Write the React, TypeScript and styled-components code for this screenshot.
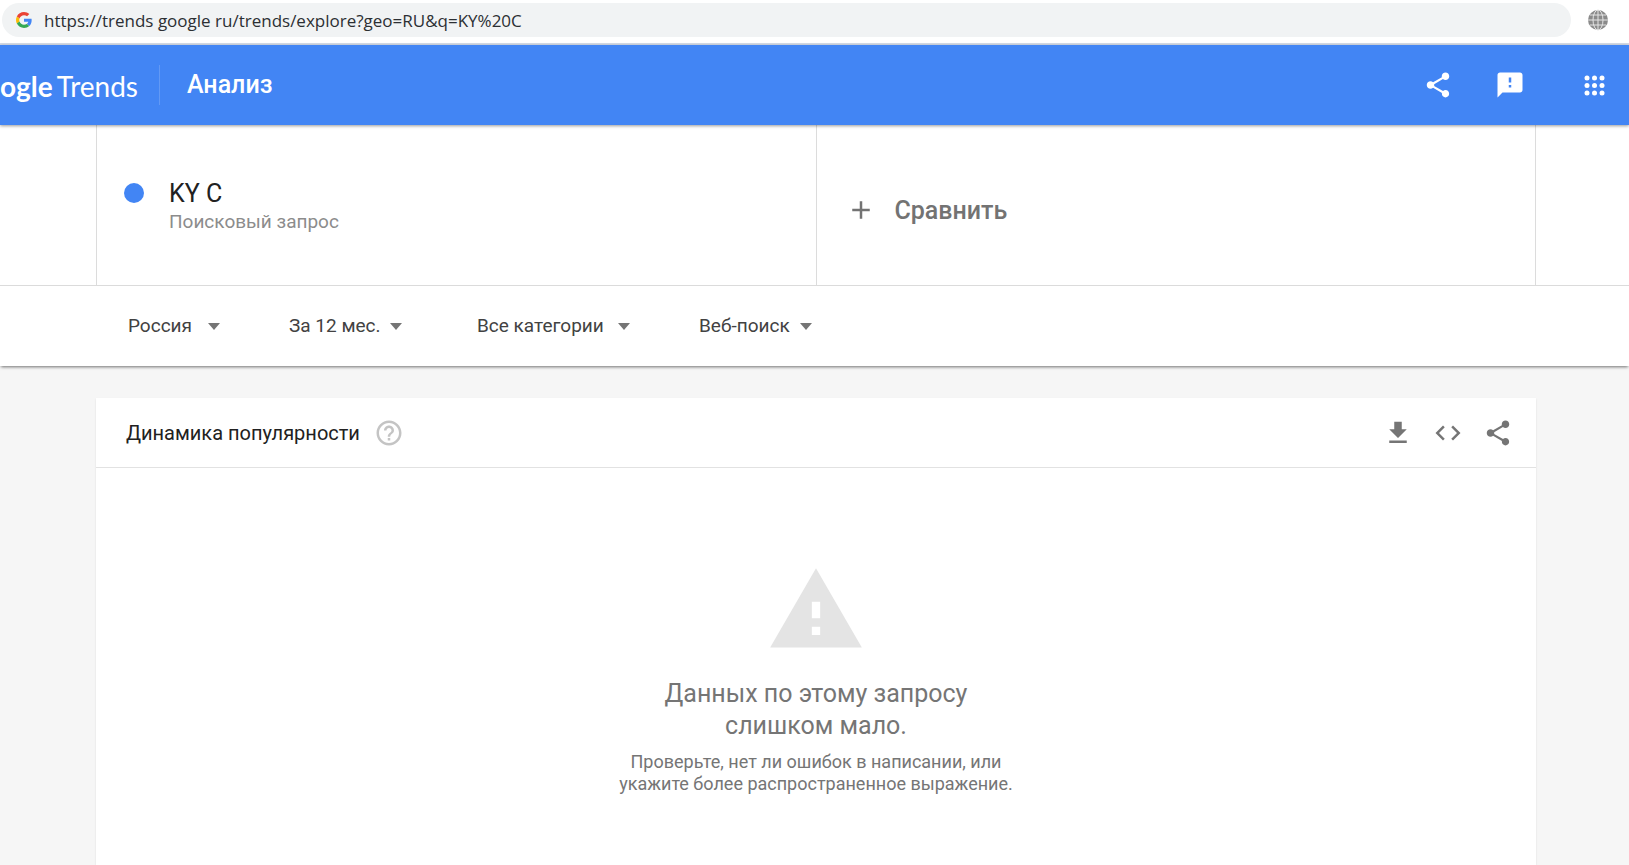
import React from "react";
import styled, { createGlobalStyle } from "styled-components";

const GlobalStyle = createGlobalStyle`
  * { box-sizing: border-box; }
  body { margin: 0; font-family: Roboto, "Liberation Sans", sans-serif; color: #212121; background: #f6f6f6; }
  h1, h2, h3, p { margin: 0; font-weight: 400; }
  button { font-family: inherit; background: none; border: 0; padding: 0; cursor: pointer; color: inherit; }
`;

const Page = styled.div`
  display: flex;
  flex-direction: column;
  min-height: 100vh;
`;

const BrowserBar = styled.div`
  display: flex;
  align-items: center;
  gap: 16px;
  padding: 3px 20px 6px 2px;
  background: #fff;
  border-bottom: 2px solid #d5dbe6;
`;

const AddressBox = styled.label`
  display: flex;
  flex: 1;
  align-items: center;
  gap: 12px;
  height: 34px;
  padding: 0 14px;
  border-radius: 17px;
  background: #f1f3f4;
`;

const AddressInput = styled.input`
  flex: 1;
  min-width: 0;
  padding: 0;
  border: 0;
  outline: 0;
  background: none;
  color: #2c2f33;
  font: 17px "Open Sans", "Noto Sans", sans-serif;
`;

const Header = styled.header`
  position: relative;
  display: flex;
  align-items: center;
  height: 80px;
  padding-right: 20px;
  background: #4285f4;
  color: #fff;
  box-shadow: 0 1px 3px rgba(0, 0, 0, 0.4);
`;

const Logo = styled.a`
  display: flex;
  gap: 4px;
  width: 160px;
  height: 40px;
  border-right: 1px solid #6299f5;
  color: #fff;
  font: 28px/42px Lato, sans-serif;
  text-decoration: none;
`;

const LogoStrong = styled.span`
  font-weight: 700;
`;

const SectionTitle = styled.h1`
  flex: 1;
  padding-left: 27px;
  font-size: 25px;
  font-weight: 500;
  line-height: 32px;
`;

const HeaderActions = styled.div`
  display: flex;
  align-items: center;
  gap: 42px;
`;

const IconButton = styled.button`
  display: flex;
`;

const QueryBand = styled.section`
  padding: 0 93px 0 96px;
  background: #fff;
  border-bottom: 1px solid #dcdcdc;
`;

const QueryRow = styled.div`
  display: grid;
  grid-template-columns: 1fr 1fr;
  height: 160px;
  border-right: 1px solid #dcdcdc;
`;

const QueryCell = styled.div`
  display: flex;
  padding: 53px 27px;
  gap: 25px;
  border-left: 1px solid #dcdcdc;
`;

const Dot = styled.span`
  width: 20px;
  height: 20px;
  margin-top: 5px;
  border-radius: 50%;
  background: #4285f4;
`;

const Term = styled.h2`
  font-size: 25px;
  line-height: 32px;
`;

const TermKind = styled.p`
  color: #8c8c8c;
  font-size: 19px;
  line-height: 24px;
`;

const CompareButton = styled.button`
  display: flex;
  align-items: center;
  gap: 19px;
  padding: 8px 29px 0;
  border-left: 1px solid #dcdcdc;
  color: #737373;
  font-size: 25px;
  font-weight: 500;
  text-align: left;
`;

const FilterBar = styled.div`
  position: relative;
  display: grid;
  grid-template-columns: 161px 188px 222px auto;
  align-items: center;
  height: 80px;
  padding: 0 128px;
  background: #fff;
  box-shadow: 0 2px 3px -1px rgba(0, 0, 0, 0.55);
`;

const FilterLabel = styled.label`
  display: flex;
  align-items: center;
`;

const FilterSelect = styled.select<{ $width: number }>`
  width: ${(p) => p.$width}px;
  margin-right: -12px;
  padding: 0 12px 0 0;
  appearance: none;
  border: 0;
  outline: 0;
  background: none;
  color: #424242;
  font: 19px/24px Roboto, sans-serif;
`;

const Caret = styled.span`
  border: 6px solid transparent;
  border-top: 7px solid #757575;
  border-bottom: 0;
  pointer-events: none;
`;

const Card = styled.main`
  display: flex;
  flex: 1;
  flex-direction: column;
  margin: 32px 93px 0 96px;
  background: #fff;
  box-shadow: 0 1px 2px rgba(0, 0, 0, 0.1);
`;

const CardHeader = styled.div`
  display: flex;
  align-items: center;
  gap: 14px;
  height: 70px;
  padding: 0 23px 0 30px;
  border-bottom: 1px solid #e2e2e2;
`;

const CardTitle = styled.h2`
  font-size: 20px;
  line-height: 24px;
`;

const CardActions = styled.div`
  display: flex;
  gap: 20px;
  margin-left: auto;
  color: #757575;
`;

const EmptyState = styled.div`
  display: flex;
  flex-direction: column;
  align-items: center;
  padding: 92px 24px 56px;
  color: #757575;
  text-align: center;
`;

const EmptyTitle = styled.h3`
  max-width: 320px;
  margin-top: 18px;
  font-size: 25px;
  line-height: 32px;
`;

const EmptyHint = styled.p`
  max-width: 400px;
  margin-top: 9px;
  font-size: 18px;
  line-height: 22px;
`;

const paths = {
  share:
    "M18 16.08c-.76 0-1.44.3-1.96.77L8.91 12.7c.05-.23.09-.46.09-.7s-.04-.47-.09-.7l7.05-4.11c.54.5 1.25.81 2.04.81 1.66 0 3-1.34 3-3s-1.34-3-3-3-3 1.34-3 3c0 .24.04.47.09.7L8.04 9.81C7.5 9.31 6.79 9 6 9c-1.66 0-3 1.34-3 3s1.34 3 3 3c.79 0 1.5-.31 2.04-.81l7.12 4.16c-.05.21-.08.43-.08.65 0 1.61 1.31 2.92 2.92 2.92s2.92-1.31 2.92-2.92-1.31-2.92-2.92-2.92z",
  feedback:
    "M20 2H4c-1.1 0-1.99.9-1.99 2L2 22l4-4h14c1.1 0 2-.9 2-2V4c0-1.1-.9-2-2-2zm-7 12h-2v-2h2v2zm0-4h-2V6h2v4z",
  download: "M19 9h-4V3H9v6H5l7 7 7-7zM5 18v2h14v-2H5z",
  code: "M9.4 16.6L4.8 12l4.6-4.6L8 6l-6 6 6 6 1.4-1.4zm5.2 0l4.6-4.6-4.6-4.6L16 6l6 6-6 6-1.4-1.4z",
  help: "M11 18h2v-2h-2v2zm1-16C6.48 2 2 6.48 2 12s4.48 10 10 10 10-4.48 10-10S17.52 2 12 2zm0 18c-4.41 0-8-3.59-8-8s3.59-8 8-8 8 3.59 8 8-3.59 8-8 8zm0-14c-2.21 0-4 1.79-4 4h2c0-1.1.9-2 2-2s2 .9 2 2c0 2-3 1.75-3 5h2c0-2.25 3-2.5 3-5 0-2.21-1.79-4-4-4z",
  warning: "M1 21h22L12 2 1 21zm12-3h-2v-2h2v2zm0-4h-2v-4h2v4z",
  plus: "M19 13h-6v6h-2v-6H5v-2h6V5h2v6h6v2z",
};

function Icon({ name, size = 30, color = "currentColor" }: { name: keyof typeof paths; size?: number; color?: string }) {
  return (
    <svg width={size} height={size} viewBox="0 0 24 24" fill={color} aria-hidden="true">
      <path d={paths[name]} />
    </svg>
  );
}

function GoogleMark() {
  return (
    <svg width="16" height="16" viewBox="0 0 48 48" aria-hidden="true">
      <path fill="#EA4335" d="M24 9.5c3.54 0 6.71 1.22 9.21 3.6l6.85-6.85C35.9 2.38 30.47 0 24 0 14.62 0 6.51 5.38 2.56 13.22l7.98 6.19C12.43 13.72 17.74 9.5 24 9.5z" />
      <path fill="#4285F4" d="M46.98 24.55c0-1.57-.15-3.09-.38-4.55H24v9.02h12.94c-.58 2.96-2.26 5.48-4.78 7.18l7.73 6c4.51-4.18 7.09-10.36 7.09-17.65z" />
      <path fill="#FBBC05" d="M10.53 28.59c-.48-1.45-.76-2.99-.76-4.59s.27-3.14.76-4.59l-7.98-6.19C.92 16.46 0 20.12 0 24s.92 7.54 2.56 10.78l7.97-6.19z" />
      <path fill="#34A853" d="M24 48c6.48 0 11.93-2.13 15.89-5.81l-7.73-6c-2.15 1.45-4.92 2.3-8.16 2.3-6.26 0-11.57-4.22-13.47-9.91l-7.98 6.19C6.51 42.62 14.62 48 24 48z" />
    </svg>
  );
}

function Globe() {
  return (
    <svg width="22" height="22" viewBox="0 0 22 22" aria-hidden="true">
      <circle cx="11" cy="11" r="10" fill="#8a8a8a" />
      <g fill="none" stroke="#e4e4e4" strokeWidth="1">
        <ellipse cx="11" cy="11" rx="5" ry="10" />
        <path d="M11 1v20M1 11h20M3 6h16M3 16h16" />
      </g>
    </svg>
  );
}

function AppsGrid() {
  const steps = [3, 10.5, 18];
  return (
    <svg width="21" height="21" viewBox="0 0 21 21" fill="#fff" aria-hidden="true">
      {steps.map((y) => steps.map((x) => <circle key={`${x}-${y}`} cx={x} cy={y} r="2.5" />))}
    </svg>
  );
}

const AppsSlot = styled.div`
  display: flex;
  padding: 0 4px 0 17px;
`;

const HelpButton = styled(IconButton)`
  color: #c4c4c4;
`;

const filters = [
  { label: "Регион", value: "Россия", width: 92 },
  { label: "Период", value: "За 12 мес.", width: 113 },
  { label: "Категория", value: "Все категории", width: 153 },
  { label: "Тип поиска", value: "Веб-поиск", width: 113 },
];

export default function App() {
  return (
    <Page>
      <GlobalStyle />
      <BrowserBar>
        <AddressBox>
          <GoogleMark />
          <AddressInput aria-label="URL" defaultValue="https://trends google ru/trends/explore?geo=RU&q=KY%20C" />
        </AddressBox>
        <Globe />
      </BrowserBar>
      <Header>
        <Logo href="#">
          <LogoStrong>ogle</LogoStrong>
          <span>Trends</span>
        </Logo>
        <SectionTitle>Анализ</SectionTitle>
        <HeaderActions>
          <IconButton aria-label="Поделиться"><Icon name="share" /></IconButton>
          <IconButton aria-label="Отзыв"><Icon name="feedback" /></IconButton>
          <AppsSlot>
            <IconButton aria-label="Приложения"><AppsGrid /></IconButton>
          </AppsSlot>
        </HeaderActions>
      </Header>
      <QueryBand>
        <QueryRow>
          <QueryCell>
            <Dot />
            <div>
              <Term>KY C</Term>
              <TermKind>Поисковый запрос</TermKind>
            </div>
          </QueryCell>
          <CompareButton>
            <Icon name="plus" />
            Сравнить
          </CompareButton>
        </QueryRow>
      </QueryBand>
      <FilterBar>
        {filters.map((f) => (
          <FilterLabel key={f.label}>
            <FilterSelect $width={f.width} aria-label={f.label}>
              <option>{f.value}</option>
            </FilterSelect>
            <Caret />
          </FilterLabel>
        ))}
      </FilterBar>
      <Card>
        <CardHeader>
          <CardTitle>Динамика популярности</CardTitle>
          <HelpButton aria-label="Справка"><Icon name="help" /></HelpButton>
          <CardActions>
            <IconButton aria-label="Скачать"><Icon name="download" /></IconButton>
            <IconButton aria-label="Встроить"><Icon name="code" /></IconButton>
            <IconButton aria-label="Поделиться"><Icon name="share" /></IconButton>
          </CardActions>
        </CardHeader>
        <EmptyState>
          <Icon name="warning" size={100} color="#e4e4e4" />
          <EmptyTitle>Данных по этому запросу слишком мало.</EmptyTitle>
          <EmptyHint>Проверьте, нет ли ошибок в написании, или укажите более распространенное выражение.</EmptyHint>
        </EmptyState>
      </Card>
    </Page>
  );
}
